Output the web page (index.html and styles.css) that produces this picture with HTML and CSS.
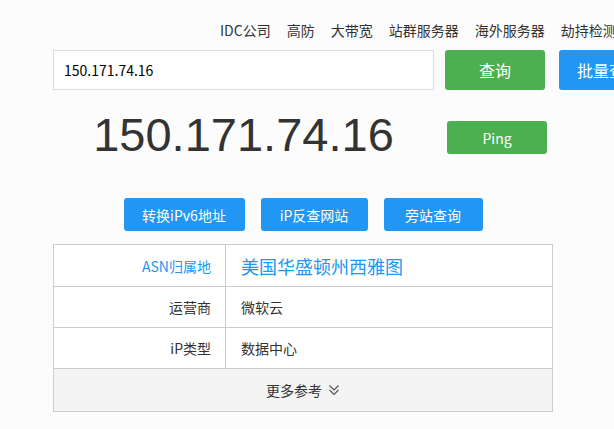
FILE: index.html
```html
<!DOCTYPE html>
<html lang="zh-CN">
<head>
<meta charset="utf-8">
<title>IP查询</title>
<link rel="stylesheet" href="styles.css">
</head>
<body>
<div class="page">
  <nav class="nav">
    <a class="nav-item">IDC公司</a>
    <a class="nav-item">高防</a>
    <a class="nav-item">大带宽</a>
    <a class="nav-item">站群服务器</a>
    <a class="nav-item">海外服务器</a>
    <a class="nav-item">劫持检测</a>
  </nav>

  <div class="search-row">
    <div class="search-input">150.171.74.16</div>
    <button class="btn btn-green btn-lg">查询</button>
    <button class="btn btn-blue btn-lg">批量查询</button>
  </div>

  <div class="ip-row">
    <div class="ip-big">150.171.74.16</div>
    <button class="btn btn-green btn-ping">Ping</button>
  </div>

  <div class="tools-row">
    <button class="btn btn-blue btn-tool btn-tool-a">转换iPv6地址</button>
    <button class="btn btn-blue btn-tool btn-tool-b">iP反查网站</button>
    <button class="btn btn-blue btn-tool btn-tool-c">旁站查询</button>
  </div>

  <div class="info-table">
    <div class="info-row info-row-first">
      <div class="info-label info-label-blue">ASN归属地</div>
      <div class="info-value info-value-big">美国华盛顿州西雅图</div>
    </div>
    <div class="info-row">
      <div class="info-label">运营商</div>
      <div class="info-value">微软云</div>
    </div>
    <div class="info-row">
      <div class="info-label">iP类型</div>
      <div class="info-value">数据中心</div>
    </div>
    <div class="info-more">
      <span>更多参考</span>
      <svg class="chev" width="12" height="12" viewBox="0 0 12 12" aria-hidden="true">
        <polyline points="1.5,1.5 6,6 10.5,1.5" fill="none" stroke="#555" stroke-width="1.2"/>
        <polyline points="1.5,6 6,10.5 10.5,6" fill="none" stroke="#555" stroke-width="1.2"/>
      </svg>
    </div>
  </div>
</div>
</body>
</html>
```

FILE: styles.css
```css
html, body {
  margin: 0;
  padding: 0;
  background: #fcfcfc;
}

body {
  font-family: "Noto Sans CJK SC", "Noto Sans", sans-serif;
  color: #333;
  font-size: 14px;
  overflow: hidden;
}

.page {
  padding-left: 53px;
  width: 1000px;
}

.nav {
  display: flex;
  gap: 16px;
  padding-left: 167px;
  padding-top: 20px;
  height: 20px;
  margin-bottom: 10px;
  white-space: nowrap;
}

.nav-item {
  font-size: 14px;
  line-height: 20px;
  color: #333;
  text-decoration: none;
}

.search-row {
  display: flex;
  align-items: stretch;
  height: 40px;
}

.search-input {
  box-sizing: border-box;
  width: 381px;
  height: 40px;
  border: 1px solid #ddd;
  background: #fff;
  padding-left: 10px;
  font-size: 14px;
  line-height: 38px;
  color: #000;
}

.btn {
  border: none;
  border-radius: 3px;
  color: #fff;
  font-family: "Noto Sans CJK SC", "Noto Sans", sans-serif;
  cursor: pointer;
  padding: 0;
}

.btn-green { background: #4caf50; }
.btn-blue { background: #2196f3; }

.btn-lg {
  width: 100px;
  height: 40px;
  font-size: 16px;
  margin-left: 11px;
}

.btn-lg + .btn-lg {
  margin-left: 14px;
}

.ip-row {
  display: flex;
  margin-top: 21px;
  height: 48px;
}

.ip-big {
  width: 381px;
  text-align: center;
  font-family: "Liberation Sans", Arial, sans-serif;
  font-size: 47px;
  line-height: 48px;
  color: #333;
}

.btn-ping {
  width: 100px;
  height: 33px;
  margin-left: 13px;
  margin-top: 10px;
  font-size: 14px;
}

.tools-row {
  display: flex;
  justify-content: center;
  gap: 16px;
  width: 500px;
  margin-top: 39px;
}

.btn-tool {
  height: 33px;
  font-size: 14px;
}

.btn-tool-a { width: 121px; }
.btn-tool-b { width: 107px; }
.btn-tool-c { width: 99px; }

.info-table {
  box-sizing: border-box;
  width: 500px;
  margin-top: 13px;
  border: 1px solid #ccc;
  background: #fff;
}

.info-row {
  display: flex;
  height: 40px;
  border-bottom: 1px solid #ccc;
}

.info-row-first {
  height: 41px;
}

.info-label {
  box-sizing: border-box;
  width: 172px;
  border-right: 1px solid #ccc;
  padding-right: 14px;
  text-align: right;
  display: flex;
  align-items: center;
  justify-content: flex-end;
  font-size: 14px;
  color: #333;
}

.info-label-blue {
  color: #2196f3;
}

.info-value {
  display: flex;
  align-items: center;
  padding-left: 15px;
  font-size: 14px;
  color: #333;
}

.info-value-big {
  font-size: 18px;
  color: #2196f3;
}

.info-more {
  height: 42px;
  background: #f4f4f4;
  display: flex;
  align-items: center;
  justify-content: center;
  gap: 6px;
  font-size: 14px;
  color: #333;
}

.chev {
  display: block;
}
```
